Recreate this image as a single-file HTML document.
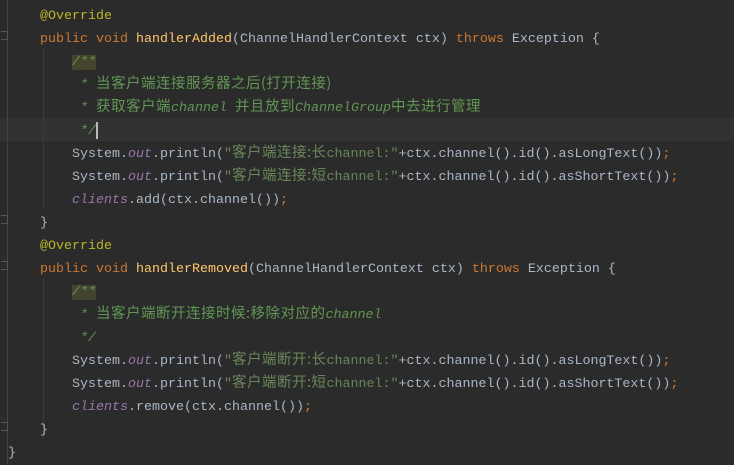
<!DOCTYPE html>
<html><head><meta charset="utf-8"><style>
body{margin:0;width:734px;height:463px;background:#2b2b2b;overflow:hidden;position:relative;font-family:"Liberation Mono",monospace;font-size:13.33px;color:#a9b7c6}
.gut{position:absolute;left:7px;top:0;width:1px;height:463px;background:#444}
.ig{position:absolute;width:1px;background:#3b3b3b}
.cur{position:absolute;left:0;top:118px;width:734px;height:23px;background:#323232}
.code{position:absolute;left:0;top:5px}
.l{height:23px;line-height:23px;white-space:pre;overflow:hidden}
.k{color:#cc7832}.a{color:#bbb529}.m{color:#ffc66d}.c{color:#629755;font-style:italic}.s{color:#6a8759}.f{color:#9876aa;font-style:italic}
.z{font-family:"Noto Sans CJK SC",sans-serif;font-size:14.5px;letter-spacing:0.5px;font-style:normal;line-height:0}
.hl{background:#45442f}
.fold{position:absolute;left:1px;width:6px;height:7px;border:1px solid #555;border-left:none;background:#2b2b2b}
.caret{display:inline-block;width:2px;height:17px;background:#bbb;vertical-align:middle}
</style></head><body>
<div class="cur"></div>
<div class="gut"></div>
<div class="ig" style="left:43px;top:48px;height:160px"></div>
<div class="ig" style="left:43px;top:278px;height:160px"></div>
<div class="fold" style="top:31px"></div>
<div class="fold" style="top:215px"></div>
<div class="fold" style="top:261px"></div>
<div class="fold" style="top:422px"></div>
<div class="code">
<div class="l">     <span class="a">@Override</span></div>
<div class="l">     <span class="k">public void </span><span class="m">handlerAdded</span>(ChannelHandlerContext ctx) <span class="k">throws </span>Exception {</div>
<div class="l">         <span class="c"><span class="hl">/**</span></span></div>
<div class="l">          <span class="c">* <span class="z">当客户端连接服务器之后(打开连接)</span></span></div>
<div class="l">          <span class="c">* <span class="z">获取客户端</span>channel <span class="z">并且放到</span>ChannelGroup<span class="z">中去进行管理</span></span></div>
<div class="l">          <span class="c">*/</span><span class="caret"></span></div>
<div class="l">         System.<span class="f">out</span>.println(<span class="s">"<span class="z">客户端连接:长</span>channel:"</span>+ctx.channel().id().asLongText())<span class="k">;</span></div>
<div class="l">         System.<span class="f">out</span>.println(<span class="s">"<span class="z">客户端连接:短</span>channel:"</span>+ctx.channel().id().asShortText())<span class="k">;</span></div>
<div class="l">         <span class="f">clients</span>.add(ctx.channel())<span class="k">;</span></div>
<div class="l">     }</div>
<div class="l">     <span class="a">@Override</span></div>
<div class="l">     <span class="k">public void </span><span class="m">handlerRemoved</span>(ChannelHandlerContext ctx) <span class="k">throws </span>Exception {</div>
<div class="l">         <span class="c"><span class="hl">/**</span></span></div>
<div class="l">          <span class="c">* <span class="z">当客户端断开连接时候:移除对应的</span>channel</span></div>
<div class="l">          <span class="c">*/</span></div>
<div class="l">         System.<span class="f">out</span>.println(<span class="s">"<span class="z">客户端断开:长</span>channel:"</span>+ctx.channel().id().asLongText())<span class="k">;</span></div>
<div class="l">         System.<span class="f">out</span>.println(<span class="s">"<span class="z">客户端断开:短</span>channel:"</span>+ctx.channel().id().asShortText())<span class="k">;</span></div>
<div class="l">         <span class="f">clients</span>.remove(ctx.channel())<span class="k">;</span></div>
<div class="l">     }</div>
<div class="l"> }</div>
</div>
</body></html>
